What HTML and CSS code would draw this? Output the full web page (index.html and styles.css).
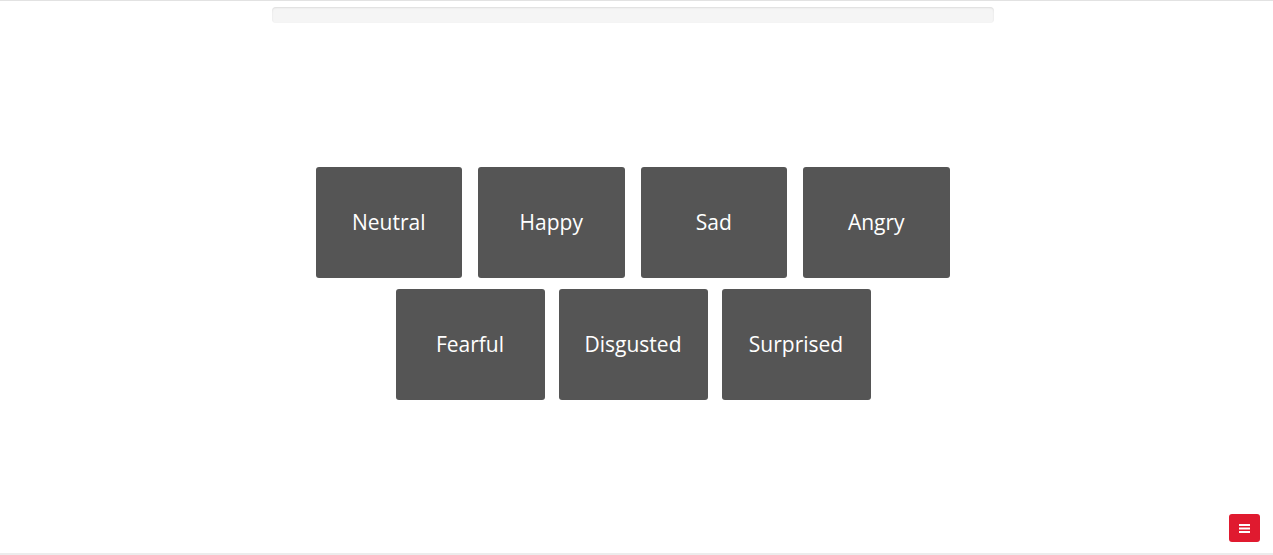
FILE: index.html
```html
<!DOCTYPE html>
<html>
<head>
<meta charset="utf-8">
<link rel="stylesheet" href="styles.css">
</head>
<body>
<div class="page">
  <div class="progress"></div>
  <div class="board">
    <div class="row row-top">
      <button class="emo">Neutral</button>
      <button class="emo">Happy</button>
      <button class="emo">Sad</button>
      <button class="emo">Angry</button>
    </div>
    <div class="row row-bottom">
      <button class="emo">Fearful</button>
      <button class="emo">Disgusted</button>
      <button class="emo">Surprised</button>
    </div>
  </div>
</div>
<button class="menu-btn" aria-label="menu">
  <svg width="11" height="9" viewBox="0 0 11 9"><rect x="0" y="0" width="11" height="2" fill="#fff"/><rect x="0" y="3.5" width="11" height="2" fill="#fff"/><rect x="0" y="7" width="11" height="2" fill="#fff"/></svg>
</button>
</body>
</html>
```
FILE: styles.css
```css
html, body {
  margin: 0;
  padding: 0;
  background: #fff;
}
body {
  font-family: "Open Sans", "Liberation Sans", sans-serif;
  width: 1273px;
  height: 555px;
  box-sizing: border-box;
  border-top: 1px solid #e2e2e2;
  border-bottom: 2px solid #ececec;
  position: relative;
  overflow: hidden;
}
.page {
  width: 1266px;
  display: flex;
  flex-direction: column;
  align-items: center;
}
.progress {
  margin-top: 6px;
  width: 722px;
  height: 16px;
  background: #f5f5f5;
  border-radius: 4px;
  box-shadow: inset 0 1px 2px rgba(0,0,0,0.1);
}
.board {
  margin-top: 144px;
  display: flex;
  flex-direction: column;
  align-items: center;
  gap: 11px;
}
.row {
  display: flex;
}
.row-top { gap: 16px; margin-right: 1px; }
.row-bottom { gap: 14px; }
.emo {
  border: none;
  margin: 0;
  padding: 0 0 1px 0;
  background: #555555;
  color: #fff;
  font-family: "Open Sans", "Liberation Sans", sans-serif;
  font-size: 21px;
  border-radius: 3px;
  height: 111px;
  display: flex;
  align-items: center;
  justify-content: center;
}
.row-top .emo { width: 146.5px; }
.row-bottom .emo { width: 149px; }
.menu-btn {
  position: absolute;
  left: 1229px;
  top: 513px;
  width: 31px;
  height: 28px;
  border: none;
  padding: 0;
  background: #e01a2f;
  border-radius: 3px;
  display: flex;
  align-items: center;
  justify-content: center;
}
.menu-btn svg { display: block; }
```
